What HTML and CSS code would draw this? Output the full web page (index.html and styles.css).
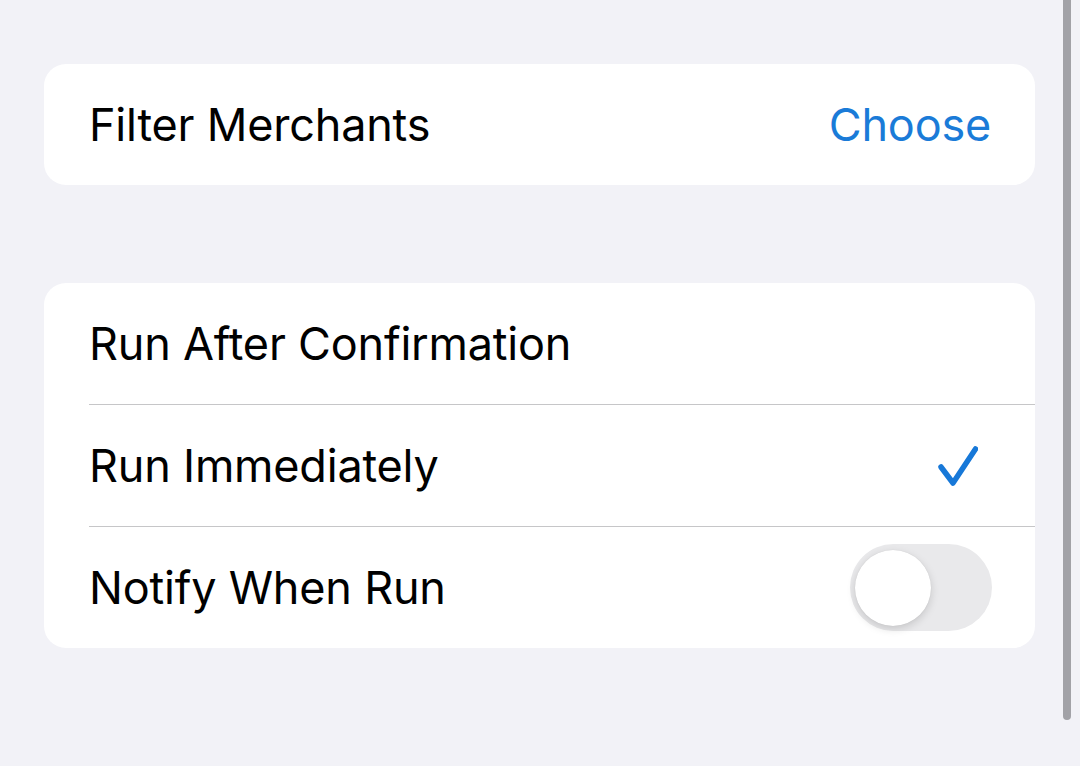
FILE: index.html
```html
<!DOCTYPE html>
<html lang="en">
<head>
<meta charset="utf-8">
<title>Automation Settings</title>
<link rel="stylesheet" href="styles.css">
</head>
<body>
<main class="page">
  <section class="card">
    <div class="row">
      <span class="label">Filter Merchants</span>
      <span class="action">Choose</span>
    </div>
  </section>
  <section class="card">
    <div class="row">
      <span class="label">Run After Confirmation</span>
    </div>
    <div class="row">
      <span class="label">Run Immediately</span>
      <svg class="check" viewBox="0 0 40 40" width="40" height="40" aria-hidden="true">
        <path d="M3 21 L15 37 L37.5 3" fill="none" stroke="#1778d8" stroke-width="5.5" stroke-linecap="round" stroke-linejoin="round"/>
      </svg>
    </div>
    <div class="row">
      <span class="label">Notify When Run</span>
      <span class="toggle"><span class="knob"></span></span>
    </div>
  </section>
</main>
<div class="scrollbar"></div>
</body>
</html>
```
FILE: styles.css
```css
html, body {
  margin: 0;
  padding: 0;
}
body {
  background: #f2f2f7;
  width: 1080px;
  height: 766px;
  overflow: hidden;
  font-family: Inter, "Noto Sans", "Liberation Sans", sans-serif;
  position: relative;
}
.page {
  padding: 64px 0 0 44px;
  width: 991px;
  display: flex;
  flex-direction: column;
  gap: 98px;
}
.card {
  background: #ffffff;
  border-radius: 22px;
  overflow: hidden;
  display: flex;
  flex-direction: column;
}
.row {
  height: 121px;
  margin-left: 45px;
  padding-right: 44px;
  display: flex;
  align-items: center;
  justify-content: space-between;
  box-sizing: border-box;
}
.row + .row {
  height: 122px;
  border-top: 1px solid #c6c6c8;
}
.label {
  font-size: 45px;
  color: #000;
  letter-spacing: -0.2px;
}
.action {
  font-size: 45px;
  color: #1a7bd8;
  letter-spacing: -0.2px;
}
.check {
  margin-right: 13px;
}
.toggle {
  width: 142px;
  height: 87px;
  border-radius: 44px;
  background: #e9e9eb;
  display: flex;
  align-items: center;
  padding-left: 5px;
  box-sizing: border-box;
  margin-right: -1px;
}
.knob {
  width: 76px;
  height: 76px;
  border-radius: 50%;
  background: #fff;
  box-shadow: 0 3px 8px rgba(0,0,0,0.15), 0 0 1px rgba(0,0,0,0.12);
}
.scrollbar {
  position: absolute;
  top: -10px;
  left: 1063px;
  width: 8px;
  height: 730px;
  border-radius: 4px;
  background: #a2a2a7;
}
```
